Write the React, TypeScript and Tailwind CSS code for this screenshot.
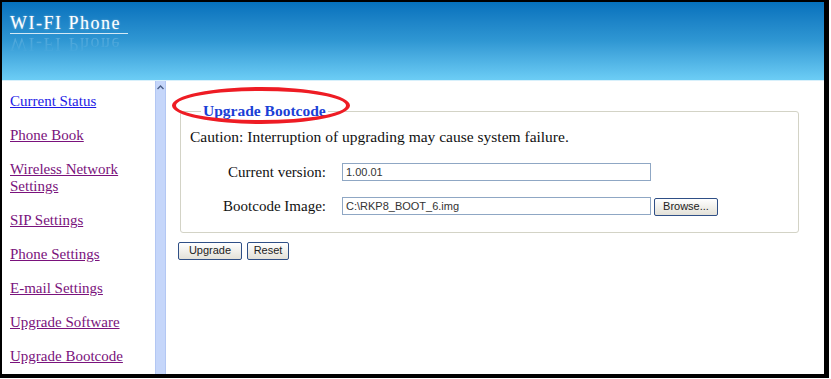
const links = [
  { label: "Current Status", fresh: true },
  { label: "Phone Book" },
  { label: "Wireless Network Settings", wrap: true },
  { label: "SIP Settings" },
  { label: "Phone Settings" },
  { label: "E-mail Settings" },
  { label: "Upgrade Software" },
  { label: "Upgrade Bootcode" },
];

function XpButton({ children, width }: { children: string; width: string }) {
  return (
    <button
      className={`${width} h-[18px] rounded-[2px] border border-[#2f4f86] bg-linear-to-b from-white to-[#e3e1d8] text-[11px] leading-none text-[#222] font-['Liberation_Sans',Arial,sans-serif]`}
    >
      {children}
    </button>
  );
}

function Field({ value }: { value: string }) {
  return (
    <div className="w-[309px] h-[18px] border border-[#8fa7c4] bg-white px-[3px] flex items-center text-[11px] text-[#333] font-['Liberation_Sans',Arial,sans-serif]">
      {value}
    </div>
  );
}

export default function App() {
  return (
    <div className="w-[831px] h-[379px] bg-white font-['Liberation_Serif','Times_New_Roman',serif]">
      <div className="w-[829px] h-[378px] border-l-2 border-t-2 border-r-[5px] border-b-4 border-black flex flex-col overflow-hidden">
        {/* header banner */}
        <div className="h-[79px] shrink-0 bg-linear-to-b from-[#0571bc] via-[#2f97d3] to-[#6ccdf5] border-b border-[#d8f0fb] pt-[12px] pl-[8px]">
          <div className="w-[118px] border-b border-white/80 text-white text-[18px] leading-[19px] tracking-[1.5px] [text-shadow:0_0_2px_rgba(255,255,255,0.5)]">
            WI-FI Phone
          </div>
          <div className="w-[118px] -scale-y-100 text-[18px] leading-[19px] tracking-[1.5px] text-transparent bg-clip-text bg-linear-to-b from-transparent to-white/50 opacity-50">
            WI-FI Phone
          </div>
        </div>

        <div className="flex flex-1 min-h-0">
          {/* side menu */}
          <nav className="w-[153px] shrink-0 pl-[8px] pt-[12px] flex flex-col gap-[17px] text-[15px] leading-[17px]">
            {links.map((l) => (
              <a
                key={l.label}
                href="#"
                className={`underline ${l.fresh ? "text-[#1d1ae6]" : "text-[#7a127c]"} ${l.wrap ? "w-[125px]" : ""}`}
              >
                {l.label}
              </a>
            ))}
          </nav>

          {/* scrollbar */}
          <div className="w-[11px] shrink-0 bg-[#c5d6fa] border-x border-[#b3c7f3] flex justify-center pt-[4px]">
            <svg width="7" height="5" viewBox="0 0 7 5">
              <path d="M0.5 4 L3.5 1 L6.5 4" fill="none" stroke="#4a5e86" strokeWidth="1.4" />
            </svg>
          </div>

          {/* main content */}
          <div className="relative flex-1 pl-[12px] pt-[21px]">
            <fieldset className="ml-[2px] w-[619px] border border-[#d3d3c6] rounded-[3px] pb-[16px]">
              <legend className="ml-[20px] px-[2px] text-[15.5px] leading-[18px] font-bold text-[#1a3fd6]">
                Upgrade Bootcode
              </legend>
              <p className="mt-[8px] pl-[9px] text-[15.5px] leading-[17px] text-[#111]">
                Caution: Interruption of upgrading may cause system failure.
              </p>
              <div className="mt-[18px] pl-[10px] flex flex-col gap-[16px] text-[15px] leading-[17px] text-[#111]">
                <div className="flex items-center">
                  <span className="w-[137px] pr-[2px] text-right">Current version:</span>
                  <span className="ml-[14px]">
                    <Field value="1.00.01" />
                  </span>
                </div>
                <div className="flex items-center">
                  <span className="w-[137px] pr-[2px] text-right">Bootcode Image:</span>
                  <span className="ml-[14px]">
                    <Field value="C:\RKP8_BOOT_6.img" />
                  </span>
                  <span className="ml-[3px]">
                    <XpButton width="w-[64px]">Browse...</XpButton>
                  </span>
                </div>
              </div>
            </fieldset>

            <div className="mt-[9px] flex gap-[5px]">
              <XpButton width="w-[64px]">Upgrade</XpButton>
              <XpButton width="w-[42px]">Reset</XpButton>
            </div>

            {/* red annotation ring */}
            <div className="absolute left-[6px] top-[6px] w-[178px] h-[37px] rounded-[50%] border-[4px] border-[#ee1c24]" />
          </div>
        </div>
      </div>
    </div>
  );
}
